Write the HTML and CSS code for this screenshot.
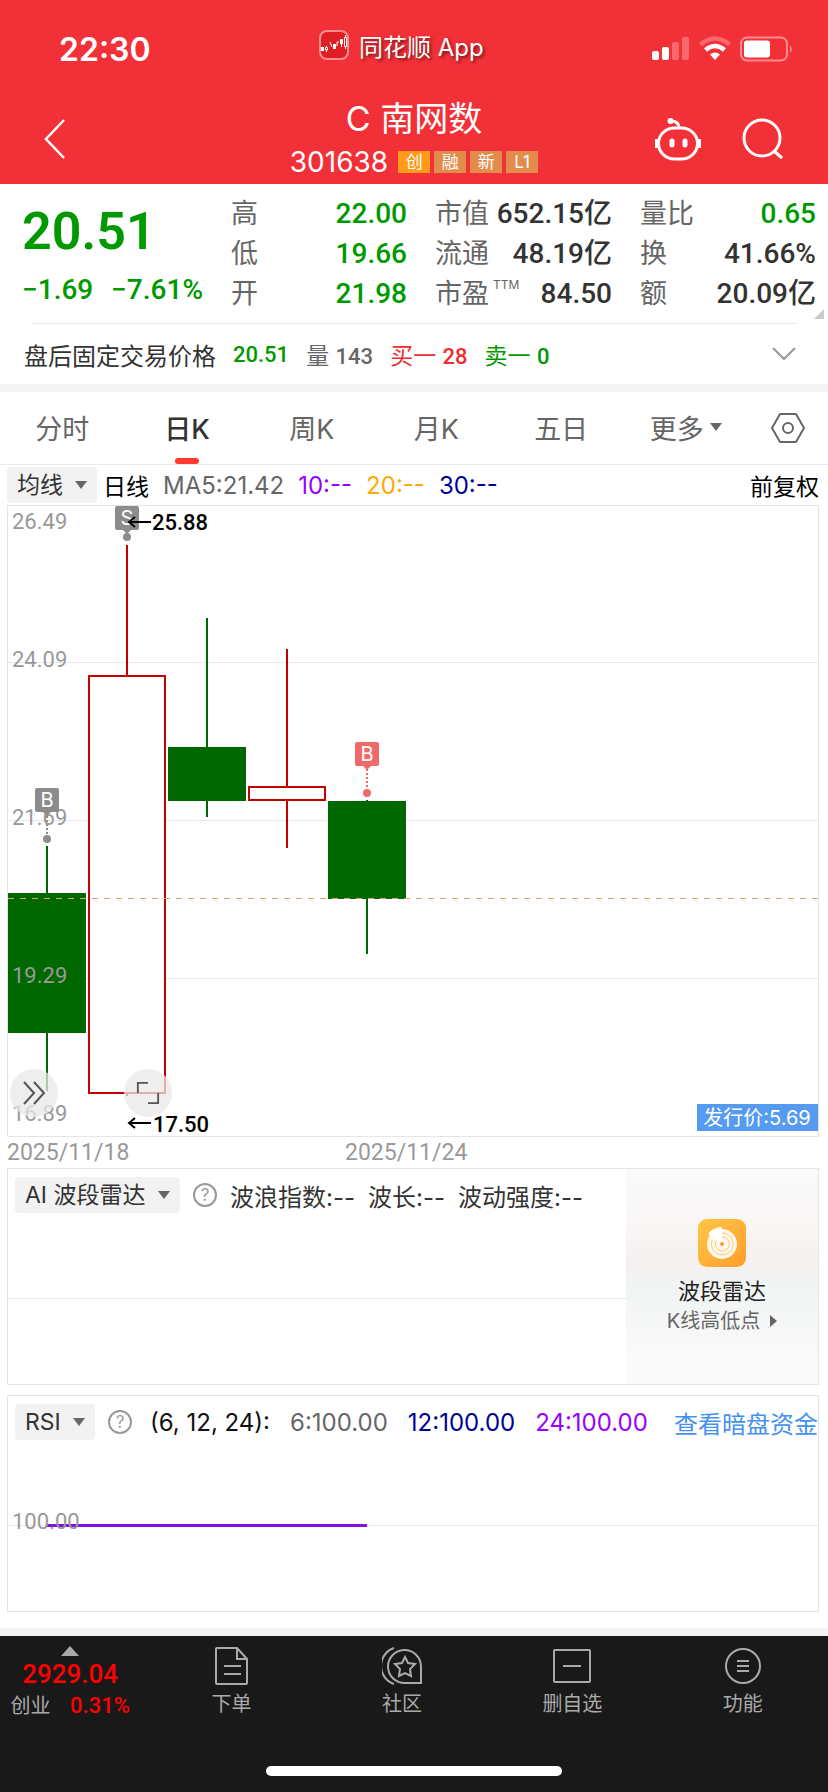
FILE: index.html
```html
<!DOCTYPE html>
<html lang="zh-CN">
<head>
    <meta charset="UTF-8">
    <meta name="viewport" content="width=device-width, initial-scale=1.0">
    <title>C南网数 301638</title>
    <link rel="stylesheet" href="styles.css">
</head>
<body>
<header class="top">
    <div class="status">
        <span class="time">22:30</span>
        <div class="app-name">
            <svg width="30" height="30" viewBox="0 0 30 30">
                <rect x="1" y="1" width="28" height="28" rx="7" fill="#e01f24" stroke="#fa8f92" stroke-width="2"/>
                <g fill="#fff"><rect x="2" y="17" width="3" height="4"/><rect x="14" y="14" width="3" height="5"/><rect x="21" y="9" width="3" height="5"/></g>
                <path d="M7.5 16v1.5M7.5 20v2M11 12l2 5M18 16v-4h2M22.5 14v3M26.5 5v2M26.5 16v3" stroke="#fff" fill="none"/>
                <path d="M6.5 17.5h2v2.5h-2zM25.5 7.5h2v9h-2z" stroke="#fff" fill="none"/>
            </svg>
            <span>同花顺 App</span>
        </div>
        <svg width="142" height="26" viewBox="0 0 142 26">
            <rect x="0" y="15" width="7" height="9" rx="2" fill="#fff"/>
            <rect x="10" y="11" width="7" height="13" rx="2" fill="#fff"/>
            <rect x="20" y="6" width="7" height="18" rx="2" fill="#f8696e"/>
            <rect x="30" y="1" width="7" height="23" rx="2" fill="#f8696e"/>
            <path d="M48.5 8.5Q63 -3.5 77.5 8.5" fill="none" stroke="#f8696e" stroke-width="4.5"/>
            <path d="M53.5 14Q63 6 72.5 14" fill="none" stroke="#fff" stroke-width="4.5"/>
            <path d="M58 18.5Q63 14.5 68 18.5L63 24z" fill="#fff"/>
            <rect x="89" y="1.5" width="46" height="23" rx="6" fill="none" stroke="#f98c90" stroke-width="2"/>
            <rect x="92" y="4.5" width="26" height="17" rx="3" fill="#fff"/>
            <path d="M138 9q3.5 4 0 8z" fill="#f98c90"/>
        </svg>
    </div>
    <div class="titlebar">
        <a class="back" href="#" aria-label="返回">
            <svg width="22" height="42" viewBox="0 0 22 42"><path d="M20 2L2 21L20 40" fill="none" stroke="#fff" stroke-width="2.5"/></svg>
        </a>
        <div class="stock">
            <h1>C 南网数</h1>
            <div class="code">
                <span class="num">301638</span>
                <span class="tag tag-main">创</span><span class="tag">融</span><span class="tag">新</span><span class="tag">L1</span>
            </div>
        </div>
        <div class="actions">
            <button aria-label="问财">
                <svg width="48" height="44" viewBox="0 0 48 44" fill="none" stroke="#fff" stroke-width="3">
                    <rect x="4.5" y="11" width="39" height="31" rx="16"/>
                    <path d="M25 11c0-5-3-7-8-7"/>
                    <circle cx="16.5" cy="4" r="3" fill="#fff" stroke="none"/>
                    <path d="M3 22v9M45 22v9" stroke-width="4"/>
                    <path d="M18 24v4M31 24v4" stroke-width="5" stroke-linecap="round"/>
                </svg>
            </button>
            <button aria-label="搜索">
                <svg width="42" height="42" viewBox="0 0 42 42" fill="none" stroke="#fff" stroke-width="3"><circle cx="20" cy="20" r="18"/><path d="M32 33l8 7"/></svg>
            </button>
        </div>
    </div>
</header>

<section class="quote">
    <div class="price">
        <strong>20.51</strong>
        <p><span>−1.69</span><span>−7.61%</span></p>
    </div>
    <dl>
        <div><dt>高</dt><dd class="green">22.00</dd></div>
        <div><dt>低</dt><dd class="green">19.66</dd></div>
        <div><dt>开</dt><dd class="green">21.98</dd></div>
    </dl>
    <dl>
        <div><dt>市值</dt><dd>652.15亿</dd></div>
        <div><dt>流通</dt><dd>48.19亿</dd></div>
        <div><dt>市盈<sup>TTM</sup></dt><dd>84.50</dd></div>
    </dl>
    <dl>
        <div><dt>量比</dt><dd class="green">0.65</dd></div>
        <div><dt>换</dt><dd>41.66%</dd></div>
        <div><dt>额</dt><dd>20.09亿</dd></div>
    </dl>
    <i class="corner"></i>
</section>

<section class="after">
    <span class="label">盘后固定交易价格</span>
    <b class="green">20.51</b>
    <span class="gray">量 <b>143</b></span>
    <span class="red">买一 <b>28</b></span>
    <span class="green">卖一 <b>0</b></span>
    <button aria-label="展开"><svg width="24" height="14" viewBox="0 0 24 14"><path d="M1 1l11 11L23 1" fill="none" stroke="#999" stroke-width="2"/></svg></button>
</section>

<nav class="tabs">
    <a href="#">分时</a>
    <a href="#" class="active">日K</a>
    <a href="#">周K</a>
    <a href="#">月K</a>
    <a href="#">五日</a>
    <a href="#">更多<i class="arrow"></i></a>
    <button aria-label="设置">
        <svg width="36" height="32" viewBox="0 0 36 32" fill="none" stroke="#666" stroke-width="2"><path d="M10 2h16l8 14l-8 14H10L2 16z"/><circle cx="18" cy="16" r="5"/></svg>
    </button>
</nav>

<main>
    <div class="ma">
        <span class="picker"><select aria-label="指标"><option>均线</option></select><i class="arrow"></i></span>
        <span class="period">日线</span>
        <span class="value gray">MA5:21.42</span>
        <span class="value purple">10:--</span>
        <span class="value yellow">20:--</span>
        <span class="value blue">30:--</span>
        <a href="#">前复权</a>
    </div>

    <div class="kline">
        <svg viewBox="0 1 810 630">
            <!-- grid -->
            <path d="M0 157.5h810M0 315.5h810M0 473.5h810" stroke="#e8e8e8"/>
            <g class="axis">
                <text x="4" y="24">26.49</text>
                <text x="4" y="162">24.09</text>
                <text x="4" y="320">21.69</text>
            </g>
            <!-- candles -->
            <g stroke="#006800" stroke-width="2" fill="#006800">
                <path d="M39 341v245M199 113v199M359 295v154"/>
                <path stroke="none" d="M0 388h78v140H0zM160 242h78v54h-78zM320 296h78v98h-78z"/>
            </g>
            <g stroke="#c50000" stroke-width="2" fill="#fff">
                <path d="M119 40v130M119 588v3M279 144v138M279 295v48"/>
                <rect x="81" y="171" width="76" height="417"/>
                <rect x="241" y="282" width="76" height="13"/>
            </g>
            <path d="M0 393.5h810" stroke="#d4a574" stroke-dasharray="6 6"/>
            <g class="axis">
                <text x="4" y="478">19.29</text>
                <text x="4" y="616">16.89</text>
            </g>
            <!-- buy and sell marks -->
            <g fill="#8c8c8c">
                <rect x="107" y="1" width="24" height="24" rx="2"/>
                <path d="M115 25h8l-4 4z"/>
                <circle cx="119" cy="32" r="4"/>
                <rect x="27" y="283" width="24" height="24" rx="2"/>
                <path d="M35 307h8l-4 4z"/>
                <circle cx="39" cy="334" r="4"/>
            </g>
            <path d="M39 311v18" stroke="#8c8c8c" stroke-width="2" stroke-dasharray="2 2"/>
            <g fill="#f16a6a">
                <rect x="347" y="237" width="24" height="24" rx="2"/>
                <path d="M355 261h8l-4 4z"/>
                <circle cx="359" cy="288" r="4"/>
            </g>
            <path d="M359 264v20" stroke="#f16a6a" stroke-width="2" stroke-dasharray="2 2"/>
            <g class="mark">
                <text x="119" y="20">S</text>
                <text x="39" y="302">B</text>
                <text x="359" y="256">B</text>
            </g>
            <path d="M143 17h-22m6-5l-6 5l6 5M143 618h-22m6-5l-6 5l6 5" fill="none" stroke="#000" stroke-width="2"/>
            <g class="peak">
                <text x="144" y="25">25.88</text>
                <text x="145" y="627">17.50</text>
            </g>
            <rect x="689" y="599" width="121" height="27" fill="#559bf0"/>
            <text class="issue" x="749" y="620">发行价:5.69</text>
        </svg>
        <button class="float float-next" aria-label="前进"><svg width="24" height="24" viewBox="0 0 24 24" fill="none" stroke="#555" stroke-width="2"><path d="M2 1l10 11L2 23M12 1l10 11l-10 11"/></svg></button>
        <button class="float float-full" aria-label="全屏"><svg width="26" height="26" viewBox="0 0 26 26" fill="none" stroke="#555" stroke-width="2"><path d="M2 13V2h11M24 13v11H13"/></svg></button>
    </div>
    <div class="dates"><span>2025/11/18</span><span>2025/11/24</span></div>

    <section class="panel radar">
        <div class="plot">
            <div class="row">
                <span class="picker"><select aria-label="副图指标"><option>AI 波段雷达</option></select><i class="arrow"></i></span>
                <button class="help">?</button>
                <span>波浪指数:--</span>
                <span>波长:--</span>
                <span>波动强度:--</span>
            </div>
            <svg viewBox="0 0 618 163"><path d="M0 77.5h618" stroke="#e8e8e8"/></svg>
        </div>
        <a class="promo" href="#">
            <svg width="48" height="48" viewBox="0 0 48 48">
                <defs><linearGradient id="gold" x1="0" y1="0" x2="1" y2="1"><stop offset="0" stop-color="#ffc746"/><stop offset="1" stop-color="#ff9d2b"/></linearGradient></defs>
                <rect width="48" height="48" rx="9" fill="url(#gold)"/>
                <circle cx="24" cy="25" r="15" fill="#fff7ea"/>
                <path d="M24 25L10 15Q15 8 24 8z" fill="#fff"/>
                <g fill="none" stroke="#ffc77a"><path d="M24 14a11 11 0 1 1 -10 7M24 18a7 7 0 1 1 -6 4"/></g>
                <circle cx="24" cy="25" r="2" fill="#ff9d2b"/>
            </svg>
            <strong>波段雷达</strong>
            <span>K线高低点<i class="arrow-right"></i></span>
        </a>
    </section>

    <section class="panel rsi">
        <div class="row">
            <span class="picker"><select aria-label="副图指标二"><option>RSI</option></select><i class="arrow"></i></span>
            <button class="help">?</button>
            <span class="params">(6, 12, 24):</span>
            <span class="gray">6:100.00</span>
            <span class="blue">12:100.00</span>
            <span class="purple">24:100.00</span>
            <a href="#">查看暗盘资金</a>
        </div>
        <svg viewBox="0 0 810 163">
            <path d="M0 77.5h810" stroke="#e8e8e8"/>
            <path d="M39 77.5h320" stroke="#8511e0" stroke-width="3"/>
            <text class="axis" x="4" y="81">100.00</text>
        </svg>
    </section>
</main>

<footer>
    <nav class="bottom">
        <a class="index" href="#">
            <i class="arrow-up"></i>
            <b>2929.04</b>
            <span>创业 <em>0.31%</em></span>
        </a>
        <a href="#">
            <svg width="40" height="40" viewBox="0 0 40 40"><path d="M5 2h20l10 11v24q0 1-1 1H5q-1 0-1-1V3q0-1 1-1zM25 2v11h10M12 20h17M12 28h17"/></svg>
            下单
        </a>
        <a href="#">
            <svg width="40" height="40" viewBox="0 0 40 40"><path d="M39 37H23a16.5 16.5 0 1 1 16-17zM12 38A19 19 0 0 1 12 2"/><path d="M23 11l3 6l7 1l-5 5l1 7l-6-3l-6 3l1-7l-5-5l7-1z"/></svg>
            社区
        </a>
        <a href="#">
            <svg width="40" height="40" viewBox="0 0 40 40"><rect x="2" y="4" width="36" height="32" rx="1"/><path d="M11 20h18"/></svg>
            删自选
        </a>
        <a href="#">
            <svg width="40" height="40" viewBox="0 0 40 40"><circle cx="20" cy="20" r="17"/><path d="M14 15h12M14 20h12M14 25h12"/></svg>
            功能
        </a>
    </nav>
    <div class="home-bar"></div>
</footer>
</body>
</html>
```
FILE: styles.css
```css
*{
    box-sizing: border-box;
    margin: 0;
    padding: 0;
}
body{
    font-family: Inter, "Noto Sans CJK SC", sans-serif;
    font-size: 23px;
    color: #333;
    background: #fff;
}
a{
    color: inherit;
    text-decoration: none;
}
button{
    display: flex;
    align-items: center;
    justify-content: center;
    background: none;
    border: none;
    cursor: pointer;
}
svg{
    display: block;
    flex-shrink: 0;
}
.green{ color: #009900; }
.red{ color: #ee2e2e; }
.gray{ color: #666; }
.purple{ color: #9900ff; }
.yellow{ color: #ffaa00; }
.blue{ color: #000099; }

/* small triangles */
.arrow{
    border: 6px solid transparent;
    border-top: 8px solid #666;
    border-bottom: none;
}
.arrow-right{
    border: 6px solid transparent;
    border-left: 7px solid #666;
    border-right: none;
}
.arrow-up{
    border: 9px solid transparent;
    border-bottom: 10px solid #aaa;
    border-top: none;
}

/* red header */
.top{
    background: #f23037;
    color: #fff;
    height: 184px;
    display: flex;
    flex-direction: column;
}
.status{
    display: flex;
    justify-content: space-between;
    align-items: center;
    height: 98px;
    padding: 0 34px 0 59px;
}
.time{
    font-size: 32px;
    font-weight: 600;
}
.app-name{
    display: flex;
    align-items: center;
    gap: 10px;
    padding-bottom: 8px;
    font-size: 24px;
    text-shadow: 2px 2px 3px rgba(0,0,0,0.5);
}
.titlebar{
    display: grid;
    grid-template-columns: 1fr auto 1fr;
    align-items: center;
    padding: 0 44px;
}
.stock{
    text-align: center;
}
.stock h1{
    font-size: 34px;
    font-weight: 400;
    line-height: 42px;
}
.code{
    display: flex;
    align-items: center;
    gap: 4px;
    height: 44px;
}
.code .num{
    font-size: 28px;
    margin-right: 6px;
}
.tag{
    width: 32px;
    height: 22px;
    line-height: 22px;
    font-size: 17px;
    background: #e28c4b;
}
.tag-main{
    background: #ff9a1a;
}
.back, .actions{
    padding-bottom: 4px;
}
.actions{
    display: flex;
    justify-content: flex-end;
    align-items: center;
    gap: 40px;
}

/* quote */
.quote{
    position: relative;
    display: grid;
    grid-template-columns: 181fr 176fr 177fr 176fr;
    column-gap: 28px;
    padding: 10px 12px 10px 22px;
}
.quote::after{
    content: "";
    position: absolute;
    left: 32px;
    right: 32px;
    bottom: 0;
    border-bottom: 1px solid #e8e8e8;
}
.price{
    min-width: 0;
    font-family: Roboto, sans-serif;
    color: #009900;
}
.price strong{
    display: block;
    font-size: 52px;
    font-weight: 600;
    line-height: 76px;
}
.price p{
    display: flex;
    justify-content: space-between;
    font-size: 28px;
    font-weight: 500;
    line-height: 40px;
    white-space: nowrap;
}
.quote dl{
    min-width: 0;
}
.quote dl div{
    display: flex;
    justify-content: space-between;
    height: 40px;
    line-height: 40px;
    white-space: nowrap;
}
.quote dt{
    font-size: 27px;
    color: #666;
}
.quote sup{
    font-size: 12px;
    line-height: 12px;
    vertical-align: 14px;
    margin-left: 4px;
}
.quote dd{
    font-family: Roboto, "Noto Sans CJK SC", sans-serif;
    font-size: 28px;
    font-weight: 500;
}
.corner{
    position: absolute;
    right: 4px;
    bottom: 5px;
    border-left: 10px solid transparent;
    border-bottom: 10px solid #ccc;
}
.after{
    display: flex;
    align-items: center;
    gap: 17px;
    height: 60px;
    padding: 0 32px 0 24px;
    white-space: nowrap;
}
.after .label{
    font-size: 24px;
}
.after b{
    font-family: Roboto, sans-serif;
    font-size: 22px;
    font-weight: 500;
}
.after button{
    margin-left: auto;
}

/* period tabs */
.tabs{
    display: grid;
    grid-template-columns: repeat(6, 125fr) 80fr;
    height: 81px;
    border-top: 8px solid #f4f4f4;
    border-bottom: 1px solid #ebebeb;
    font-size: 27px;
    color: #666;
}
.tabs a{
    position: relative;
    display: flex;
    align-items: center;
    justify-content: center;
    gap: 6px;
    padding-bottom: 2px;
}
.tabs .active{
    color: #333;
    font-weight: 500;
}
.tabs .active::after{
    content: "";
    position: absolute;
    bottom: 0;
    width: 24px;
    height: 6px;
    border-radius: 3px;
    background: #ff3b30;
}

main{
    padding: 0 9px 16px 7px;
    border-bottom: 8px solid #f4f4f4;
}
.ma{
    display: flex;
    align-items: center;
    gap: 14px;
    height: 40px;
    white-space: nowrap;
}
.ma .value{
    font-size: 24px;
}
.ma a{
    margin-left: auto;
    color: #000;
}
.period{
    color: #000;
    margin: 0 0 0 -8px;
}
.picker{
    position: relative;
    display: flex;
    align-items: center;
}
.picker select{
    appearance: none;
    height: 36px;
    padding: 0 34px 0 10px;
    border: none;
    border-radius: 4px;
    background: #f2f2f2;
    color: #333;
    font: inherit;
    font-size: 23px;
}
.picker .arrow{
    position: absolute;
    right: 10px;
    pointer-events: none;
}

/* candles */
.kline{
    position: relative;
    border: 1px solid #e5e5e5;
}
.kline svg, .panel .plot > svg, .rsi > svg{
    width: 100%;
    overflow: visible;
}
.axis, .peak{
    font-family: Roboto, sans-serif;
    font-size: 22px;
    fill: #999;
}
.peak{
    fill: #000;
    font-weight: 500;
}
.mark{
    fill: #fff;
    font-size: 20px;
    text-anchor: middle;
}
.issue{
    fill: #fff;
    font-size: 20px;
    text-anchor: middle;
}
.float{
    position: absolute;
    bottom: 19px;
    width: 48px;
    height: 48px;
    border-radius: 50%;
    background: rgba(232,232,232,0.75);
}
.kline .float svg{
    width: 24px;
}
.float-next{ left: 2px; }
.float-full{ left: 116px; }
.dates{
    display: grid;
    grid-template-columns: 338fr 474fr;
    font-family: Roboto, sans-serif;
    color: #999;
    line-height: 31px;
}

/* indicator panels */
.panel{
    border: 1px solid #e5e5e5;
    margin-bottom: 10px;
}
.row{
    display: flex;
    align-items: center;
    height: 52px;
    padding-left: 7px;
    gap: 13px;
    font-size: 24px;
    white-space: nowrap;
}
.help{
    width: 24px;
    height: 24px;
    border: 2px solid #999;
    border-radius: 50%;
    color: #999;
    font-family: inherit;
    font-size: 17px;
}
.radar{
    display: grid;
    grid-template-columns: 618fr 192fr;
}
.promo{
    display: flex;
    flex-direction: column;
    align-items: center;
    justify-content: center;
    background: linear-gradient(#fafafa 0%, #f9f5f5 30%, #f6f0f0 42%, #f0f4f2 55%, #f6f8f7 75%, #fafafa 90%);
}
.promo strong{
    font-size: 22px;
    font-weight: 400;
    color: #222;
    margin-top: 8px;
    line-height: 32px;
}
.promo span{
    display: flex;
    align-items: center;
    gap: 10px;
    font-size: 20px;
    line-height: 28px;
    color: #666;
}
.rsi{
    margin-bottom: 0;
}
.rsi .row{
    gap: 20px;
}
.rsi .help{
    margin: 0 -2px 0 -7px;
}
.params{
    color: #111;
}
.rsi a{
    margin-left: auto;
    color: #4691ee;
}

/* bottom bar */
footer{
    background: #191919;
    height: 156px;
    display: flex;
    flex-direction: column;
    justify-content: space-between;
    align-items: center;
    padding-bottom: 16px;
}
.bottom{
    display: grid;
    grid-template-columns: 146fr repeat(4, 170fr);
    width: 100%;
    padding-top: 10px;
}
.bottom a{
    display: flex;
    flex-direction: column;
    align-items: center;
    gap: 4px;
    font-size: 20px;
    line-height: 28px;
    color: #aaa;
}
.bottom svg{
    fill: none;
    stroke: #aaa;
    stroke-width: 2;
}
.bottom .index{
    padding-right: 6px;
}
.index b{
    font-family: Roboto, sans-serif;
    font-size: 26px;
    font-weight: 500;
    color: #ff0000;
}
.index em{
    font-family: Roboto, sans-serif;
    font-style: normal;
    font-size: 22px;
    font-weight: 500;
    color: #ff0000;
    margin-left: 14px;
}
.home-bar{
    width: 296px;
    height: 10px;
    border-radius: 5px;
    background: #fff;
}
```
